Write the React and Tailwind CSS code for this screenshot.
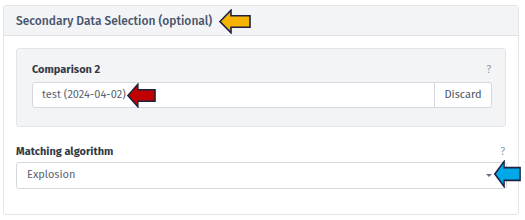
import React from "react";

function Arrow({ fill, className, w, h }) {
  // left-pointing arrow
  return (
    <svg className={className} width={w} height={h} viewBox="0 0 32 24" preserveAspectRatio="none">
      <path
        d="M1 12 L12 1.2 L12 6.5 L31 6.5 L31 17.5 L12 17.5 L12 22.8 Z"
        fill={fill}
        stroke="#1c2340"
        strokeWidth="1.6"
        strokeLinejoin="miter"
      />
    </svg>
  );
}

export default function App() {
  return (
    <div className="w-[525px] h-[220px] bg-white relative" style={{ fontFamily: '"Fira Sans", "Open Sans", "Noto Sans", sans-serif' }}>
      <div className="absolute left-[3px] top-[5px] w-[516px] h-[210px] border border-[#e3e5ea] rounded-[3px] flex flex-col">
        <div className="h-[30px] bg-[#f3f4f6] border-b border-[#dfe2e7] flex items-center pl-[12px]">
          <span className="text-[12px] font-medium text-[#46536a]">Secondary Data Selection (optional)</span>
        </div>
        <div className="px-[12px] pt-[12px]">
          <div className="bg-[#f3f4f6] border border-[#e3e5ea] rounded-[3px] h-[79px] pl-[15px] pr-[13px] pt-[14px]">
            <div className="flex justify-between items-center h-[14px]">
              <span className="text-[11px] font-bold text-[#333a44]">Comparison 2</span>
              <span className="text-[10px] text-[#8a94a0] mr-[1px]">?</span>
            </div>
            <div className="flex mt-[5px] h-[26px]">
              <div className="w-[403px] shrink-0 bg-white border border-[#d5d9df] rounded-l-[3px] flex items-center pl-[9px] text-[11px] text-[#5a6270]">test (2024-04-02)</div>
              <div className="w-[57px] shrink-0 bg-white border border-[#d5d9df] border-l-0 rounded-r-[3px] flex items-center justify-center text-[11px] text-[#4a5260]">Discard</div>
            </div>
          </div>
          <div className="flex justify-between items-center mt-[18px] h-[14px]">
            <span className="text-[11px] font-bold text-[#333a44]">Matching algorithm</span>
            <span className="text-[10px] text-[#8a94a0] mr-[1px]">?</span>
          </div>
          <div className="mt-[3px] h-[27px] w-[491px] bg-white border border-[#d5d9df] rounded-[3px] flex items-center pl-[10px] text-[11px] text-[#5a6270] relative">
            Explosion
            <span className="absolute right-[14px] top-[11px] w-0 h-0 border-l-[3px] border-r-[3px] border-t-[3px] border-l-transparent border-r-transparent border-t-[#6a7280]"></span>
          </div>
        </div>
      </div>
      <Arrow fill="#f5b400" className="absolute left-[219px] top-[9px]" w={32} h={25} />
      <Arrow fill="#c00000" className="absolute left-[127px] top-[83px]" w={29} h={25} />
      <Arrow fill="#00a8e8" className="absolute left-[494px] top-[160px]" w={27} h={28} />
    </div>
  );
}
